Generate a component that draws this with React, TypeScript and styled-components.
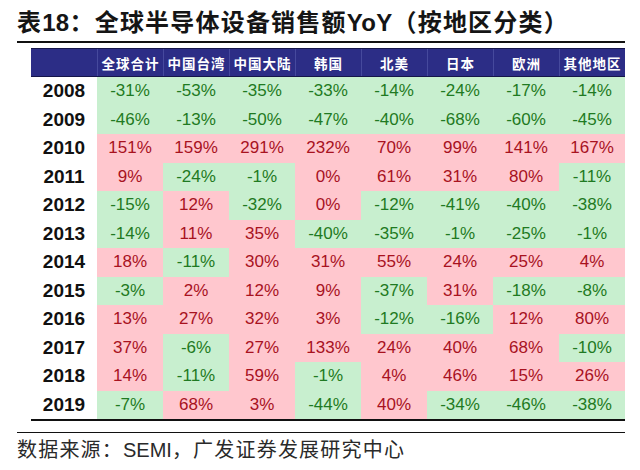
import React from "react";
import styled, { createGlobalStyle } from "styled-components";

const GlobalStyle = createGlobalStyle`
  html, body {
    margin: 0;
    padding: 0;
    background: #fff;
  }
  body {
    font-family: "Liberation Sans", "Noto Sans CJK SC", sans-serif;
  }
`;

const regions = ["全球合计", "中国台湾", "中国大陆", "韩国", "北美", "日本", "欧洲", "其他地区"];

const rows: { year: string; values: number[] }[] = [
  { year: "2008", values: [-31, -53, -35, -33, -14, -24, -17, -14] },
  { year: "2009", values: [-46, -13, -50, -47, -40, -68, -60, -45] },
  { year: "2010", values: [151, 159, 291, 232, 70, 99, 141, 167] },
  { year: "2011", values: [9, -24, -1, 0, 61, 31, 80, -11] },
  { year: "2012", values: [-15, 12, -32, 0, -12, -41, -40, -38] },
  { year: "2013", values: [-14, 11, 35, -40, -35, -1, -25, -1] },
  { year: "2014", values: [18, -11, 30, 31, 55, 24, 25, 4] },
  { year: "2015", values: [-3, 2, 12, 9, -37, 31, -18, -8] },
  { year: "2016", values: [13, 27, 32, 3, -12, -16, 12, 80] },
  { year: "2017", values: [37, -6, 27, 133, 24, 40, 68, -10] },
  { year: "2018", values: [14, -11, 59, -1, 4, 46, 15, 26] },
  { year: "2019", values: [-7, 68, 3, -44, 40, -34, -46, -38] },
];

export default function App() {
  return (
    <>
      <GlobalStyle />
      <Page>
        <Title>
          表<TitleNum>18</TitleNum>：全球半导体设备销售额<TitleNum>YoY</TitleNum>（按地区分类）
        </Title>
        <Table>
          <HeaderRow>
            <HeaderCell />
            {regions.map((r) => (
              <HeaderCell key={r}>{r}</HeaderCell>
            ))}
          </HeaderRow>
          {rows.map((row) => (
            <DataRow key={row.year}>
              <YearCell>{row.year}</YearCell>
              {row.values.map((v, i) => (
                <ValueCell key={i} negative={v < 0}>
                  {v}%
                </ValueCell>
              ))}
            </DataRow>
          ))}
        </Table>
        <Source>
          数据来源：<SourceLatin>SEMI</SourceLatin>，广发证券发展研究中心
        </Source>
      </Page>
    </>
  );
}

const Page = styled.div`
  width: 608px;
  padding-left: 17px;
  display: flex;
  flex-direction: column;
`;

const Title = styled.div`
  height: 43px;
  box-sizing: border-box;
  padding-top: 6px;
  line-height: 30px;
  font-size: 24px;
  font-weight: 700;
  letter-spacing: 1.2px;
  color: #151515;
  font-family: "Noto Sans CJK SC", sans-serif;
  border-bottom: 2px solid #111;
  white-space: nowrap;
`;

const TitleNum = styled.span`
  font-family: "Liberation Sans", sans-serif;
  font-weight: 700;
  letter-spacing: 0.3px;
`;

const Table = styled.div`
  margin: 5px 0 0 14px;
  width: 594px;
  display: flex;
  flex-direction: column;
  border-bottom: 2px solid #111;
`;

const HeaderRow = styled.div`
  display: grid;
  grid-template-columns: repeat(9, 66px);
  height: 29px;
  box-sizing: border-box;
  background: #2c2d86;
  border-top: 1px solid #15154a;
  border-bottom: 1px solid #15154a;
`;

const HeaderCell = styled.div`
  display: flex;
  align-items: center;
  justify-content: center;
  color: #fff;
  font-family: "Noto Sans CJK SC", sans-serif;
  font-weight: 700;
  font-size: 13.5px;
  letter-spacing: 1px;
  border-left: 1px solid rgba(120, 125, 200, 0.35);
  &:first-child {
    border-left: none;
  }
`;

const DataRow = styled.div`
  display: grid;
  grid-template-columns: repeat(9, 66px);
  height: 28.5px;
`;

const YearCell = styled.div`
  display: flex;
  align-items: center;
  justify-content: center;
  font-weight: 700;
  font-size: 19px;
  color: #111;
  background: #fff;
`;

const ValueCell = styled.div<{ negative: boolean }>`
  display: flex;
  align-items: center;
  justify-content: center;
  font-size: 17px;
  background: ${(p) => (p.negative ? "#c8efcf" : "#ffc7ce")};
  color: ${(p) => (p.negative ? "#1f7a22" : "#a8121f")};
`;

const Source = styled.div`
  margin-top: 11px;
  padding-top: 4px;
  border-top: 1.5px solid #111;
  font-family: "Noto Sans CJK SC", sans-serif;
  font-size: 20px;
  line-height: 24px;
  letter-spacing: 1.2px;
  color: #2a2a2a;
  white-space: nowrap;
`;

const SourceLatin = styled.span`
  font-family: "Liberation Sans", sans-serif;
  letter-spacing: 0;
`;
